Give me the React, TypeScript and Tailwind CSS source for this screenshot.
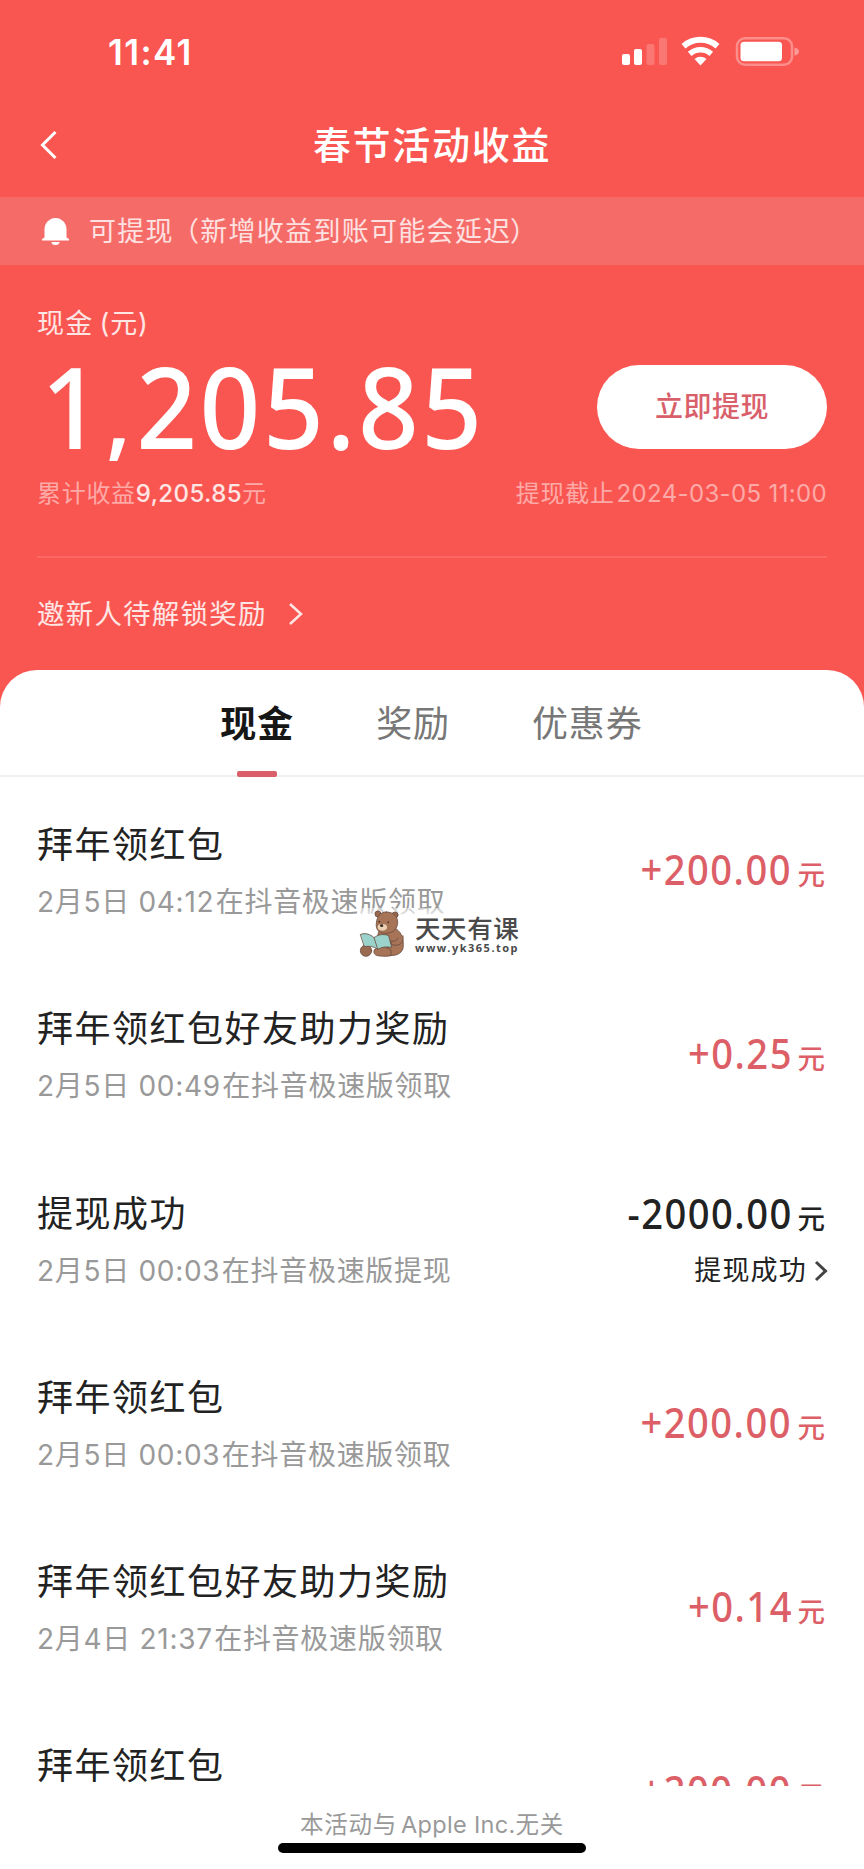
import React from "react";

type Entry = {
  title: string;
  date: string;
  source: string;
  amount: string;
  status?: string;
};

const entries: Entry[] = [
  { title: "拜年领红包", date: "2月5日 04:12", source: "在抖音极速版领取", amount: "+200.00" },
  { title: "拜年领红包好友助力奖励", date: "2月5日 00:49", source: "在抖音极速版领取", amount: "+0.25" },
  { title: "提现成功", date: "2月5日 00:03", source: "在抖音极速版提现", amount: "-2000.00", status: "提现成功" },
  { title: "拜年领红包", date: "2月5日 00:03", source: "在抖音极速版领取", amount: "+200.00" },
  { title: "拜年领红包好友助力奖励", date: "2月4日 21:37", source: "在抖音极速版领取", amount: "+0.14" },
  { title: "拜年领红包", date: "", source: "", amount: "+200.00" },
];

function StatusBar() {
  return (
    <div className="flex h-[100px] items-center justify-between pl-[108px] pr-[65px] pt-[2px]">
      <span className="pt-px text-[35px] font-semibold leading-[40px] tracking-[1.400px]">11:41</span>
      <svg width="177" height="30" viewBox="0 0 177 30" className="shrink-0" fill="#fff">
        <rect x="0" y="18" width="8" height="11" rx="2" />
        <rect x="12" y="13" width="8" height="16" rx="2" />
        <rect x="24.500" y="8" width="8" height="21" rx="2" opacity=".2" />
        <rect x="37" y="2" width="8" height="27" rx="2" opacity=".2" />
        <path d="M61.500 10.200a26 26 0 0 1 34 0" fill="none" stroke="#fff" strokeWidth="6" />
        <path d="M67.700 17.800a16.500 16.500 0 0 1 21.600 0" fill="none" stroke="#fff" strokeWidth="5.500" />
        <path d="M72.500 23a9.500 9.500 0 0 1 12 0L78.500 29.500z" />
        <rect x="115" y="2.250" width="55" height="26.500" rx="8" fill="none" stroke="#fff" strokeOpacity=".33" strokeWidth="2.500" />
        <rect x="118.500" y="5.750" width="41.500" height="19.500" rx="3.500" />
        <path d="M172.500 11.500q4.500 1 4.500 4t-4.500 4z" opacity=".4" />
      </svg>
    </div>
  );
}

function Bear() {
  return (
    <svg width="50" height="50" viewBox="50 85 150 150" className="shrink-0">
      <g stroke="#6b4d3e" strokeWidth="2.500" strokeLinejoin="round" strokeLinecap="round">
        <circle cx="113" cy="103" r="9" fill="#9a6a50" />
        <circle cx="164" cy="106" r="9" fill="#9a6a50" />
        <path d="M118 150c-12 20-10 67 20 77 34 4 52-8 51-32 0-24-8-40-26-50z" fill="#a87458" />
        <path d="M138 97c23 0 35 15 34 34-2 22-20 31-39 30-20-2-27-13-25-31 2-20 12-33 30-33z" fill="#a87458" />
        <ellipse cx="77" cy="213" rx="17" ry="17" fill="#9a6a50" />
        <path d="M104 209c12-10 36-8 48 2v17c-14 3-34 2-44-1-8-4-10-12-4-18z" fill="#a87458" />
        <path d="M61 164c14-5 28-1 40 10 13-10 28-12 44-6l9 35c-16-3-30-1-42 6-13-9-25-11-39-8z" fill="#9bd3cc" />
        <path d="M101 174l11 34" fill="none" />
        <path d="M188 168c4 23-12 33-34 27l-3-11c12 2 20-1 22-9" fill="#a87458" />
      </g>
      <ellipse cx="126" cy="143" rx="14" ry="10" fill="#ecd2b4" />
      <ellipse cx="124" cy="138" rx="5" ry="4" fill="#3a2a25" />
      <circle cx="117" cy="126" r="2.500" fill="#3a2a25" />
      <circle cx="144" cy="128" r="2.500" fill="#3a2a25" />
    </svg>
  );
}

function Watermark() {
  return (
    <div className="absolute left-[357px] top-[908px] flex h-[54px] w-[165px] bg-linear-to-b from-white/50 to-white to-30%">
      <Bear />
      <div className="flex flex-col pl-[8px] pt-[5px] text-[#4a4a4a]">
        <span className="h-[28px] whitespace-nowrap text-[25.500px] font-medium leading-[31px] tracking-[0.600px]">天天有课</span>
        <span className="whitespace-nowrap font-['Noto_Sans'] text-[11px] font-bold leading-[13px] tracking-[1.500px]">www.yk365.top</span>
      </div>
    </div>
  );
}

function Row({ entry }: { entry: Entry }) {
  const negative = entry.amount.startsWith("-");
  return (
    <li className="flex h-[184.300px] shrink-0 justify-between pl-[37px] pr-[39px]">
      <div className="flex flex-col pt-[44px]">
        <h2 className="text-[36px] leading-[50px] tracking-[1.500px] text-[#222]">{entry.title}</h2>
        {entry.date && (
          <p className="mt-[12px] flex text-[28px] leading-[40px] tracking-[0.700px] text-[#999]">
            <span className="whitespace-pre">{entry.date}</span>
            <span className="ml-[1.500px]">{entry.source}</span>
          </p>
        )}
      </div>
      <div className={negative ? "flex flex-col items-end pt-[43px] text-[#222]" : "flex flex-col items-end pt-[68px] text-[#dc5f67]"}>
        <div className="flex items-baseline leading-[50px]">
          <span className="origin-right scale-x-[0.93] font-['Noto_Sans'] text-[41px] font-medium leading-[50px] tracking-[1.600px]">{entry.amount}</span>
          <span className="ml-[5px] text-[27.500px] font-medium">元</span>
        </div>
        {entry.status && (
          <div className="mt-[7px] -mr-[3px] flex items-center">
            <span className="text-[27px] leading-[40px] tracking-[1.200px]">{entry.status}</span>
            <svg width="14" height="22" viewBox="0 0 14 22" className="ml-[7px]" fill="none" stroke="#444" strokeWidth="3">
              <path d="M2 2l9.500 9L2 20" />
            </svg>
          </div>
        )}
      </div>
    </li>
  );
}

export default function App() {
  return (
    <div className="relative flex h-[1869px] w-[864px] flex-col overflow-hidden bg-[#fa5651] font-['Inter','Noto_Sans_CJK_SC',sans-serif] text-white">
      <StatusBar />
      <header className="grid h-[97px] grid-cols-[80px_1fr_80px] items-center pb-[7px]">
        <svg width="20" height="32" viewBox="0 0 20 32" className="ml-[38px]" fill="none" stroke="#fff" strokeWidth="3">
          <path d="M17.500 3L4.500 16l13 13" />
        </svg>
        <h1 className="text-center text-[38px] font-medium leading-[50px] tracking-[1.700px]">春节活动收益</h1>
      </header>

      <div className="flex h-[68px] items-center bg-[#f56b68] pl-[41px] pt-[1px]">
        <svg width="29" height="28" viewBox="0 0 29 28" className="-mt-[2px]" fill="#fff">
          <path d="M3.500 20.500V12.500a11 11.500 0 0 1 22 0v8l2.500 1.500v1.500H1V22zM10.500 25h8a4 3 0 0 1-8 0z" />
        </svg>
        <p className="ml-[19px] flex text-[27px] leading-[40px] tracking-[1.300px] text-white/80">
          <span>可提现</span>
          <span className="-ml-[2px]">（新增收益到账可能会延迟</span>
          <span className="-ml-[1.500px]">）</span>
        </p>
      </div>

      <section className="flex h-[405px] flex-col pl-[37px] pr-[37px] pt-[39px]">
        <p className="flex text-[27px] leading-[40px] tracking-[1.300px] text-white/85">
          <span>现金</span>
          <span className="ml-[6px] tracking-[0.800px]">(元)</span>
        </p>
        <div className="flex h-[124px] items-center justify-between">
          <span className="ml-[4px] origin-left scale-x-[0.95] font-['Noto_Sans'] text-[112px] font-medium leading-[124px] tracking-[2.700px]">
            1<span className="ml-[2px] mr-[3px] text-[92px] font-semibold leading-none">,</span>205.85
          </span>
          <button className="mt-[2px] h-[84px] w-[230px] shrink-0 rounded-full bg-white text-[28px] font-medium leading-[40px] tracking-[0.500px] text-[#d9606a]">
            立即提现
          </button>
        </div>
        <div className="mt-[8px] flex items-center justify-between text-[24px] leading-[36px] text-white/50">
          <p className="flex">
            <span className="tracking-[0.700px]">累计收益</span>
            <span className="font-medium tracking-[0.400px] text-white/85">9,205.85</span>
            <span>元</span>
          </p>
          <p className="flex">
            <span className="tracking-[0.700px]">提现截止</span>
            <span className="ml-[2px] tracking-[0.350px]">2024-03-05 11:00</span>
          </p>
        </div>
        <div className="mt-[44px] h-[2px] shrink-0 bg-white/10" />
        <div className="mt-[36px] flex items-center text-white/85">
          <span className="text-[27.500px] leading-[40px] tracking-[1.200px]">邀新人待解锁奖励</span>
          <svg width="16" height="24" viewBox="0 0 16 24" className="ml-[21px]" fill="none" stroke="currentColor" strokeWidth="2.500">
            <path d="M2 2l11 10L2 22" />
          </svg>
        </div>
      </section>

      <main className="flex h-[1116px] shrink-0 flex-col overflow-hidden rounded-t-[37px] bg-white text-[#222]">
        <nav className="flex h-[107px] shrink-0 justify-center gap-[82px] border-b-2 border-[#efefef] pr-px text-[36px] leading-[50px] tracking-[0.900px] text-[#777]">
          <div className="flex flex-col items-center pt-[29px]">
            <span className="font-bold text-[#161616]">现金</span>
            <span className="mt-[22px] h-[6px] w-[40px] shrink-0 rounded-[2px] bg-[#d9606a]" />
          </div>
          <span className="pt-[29px]">奖励</span>
          <span className="pt-[29px]">优惠券</span>
        </nav>
        <ul className="-mt-px flex flex-col">
          {entries.map((entry, i) => (
            <Row key={i} entry={entry} />
          ))}
        </ul>
      </main>

      <footer className="flex h-[83px] flex-col items-center bg-white">
        <p className="mt-[22px] flex whitespace-pre text-[23.500px] leading-[34px] tracking-[0.800px] text-[#999]">
          <span>本活动与</span>
          <span className="ml-[4px] tracking-[0.300px]">Apple Inc.</span>
          <span>无关</span>
        </p>
        <div className="mt-px h-[10px] w-[308px] rounded-full bg-black" />
      </footer>

      <Watermark />
    </div>
  );
}
